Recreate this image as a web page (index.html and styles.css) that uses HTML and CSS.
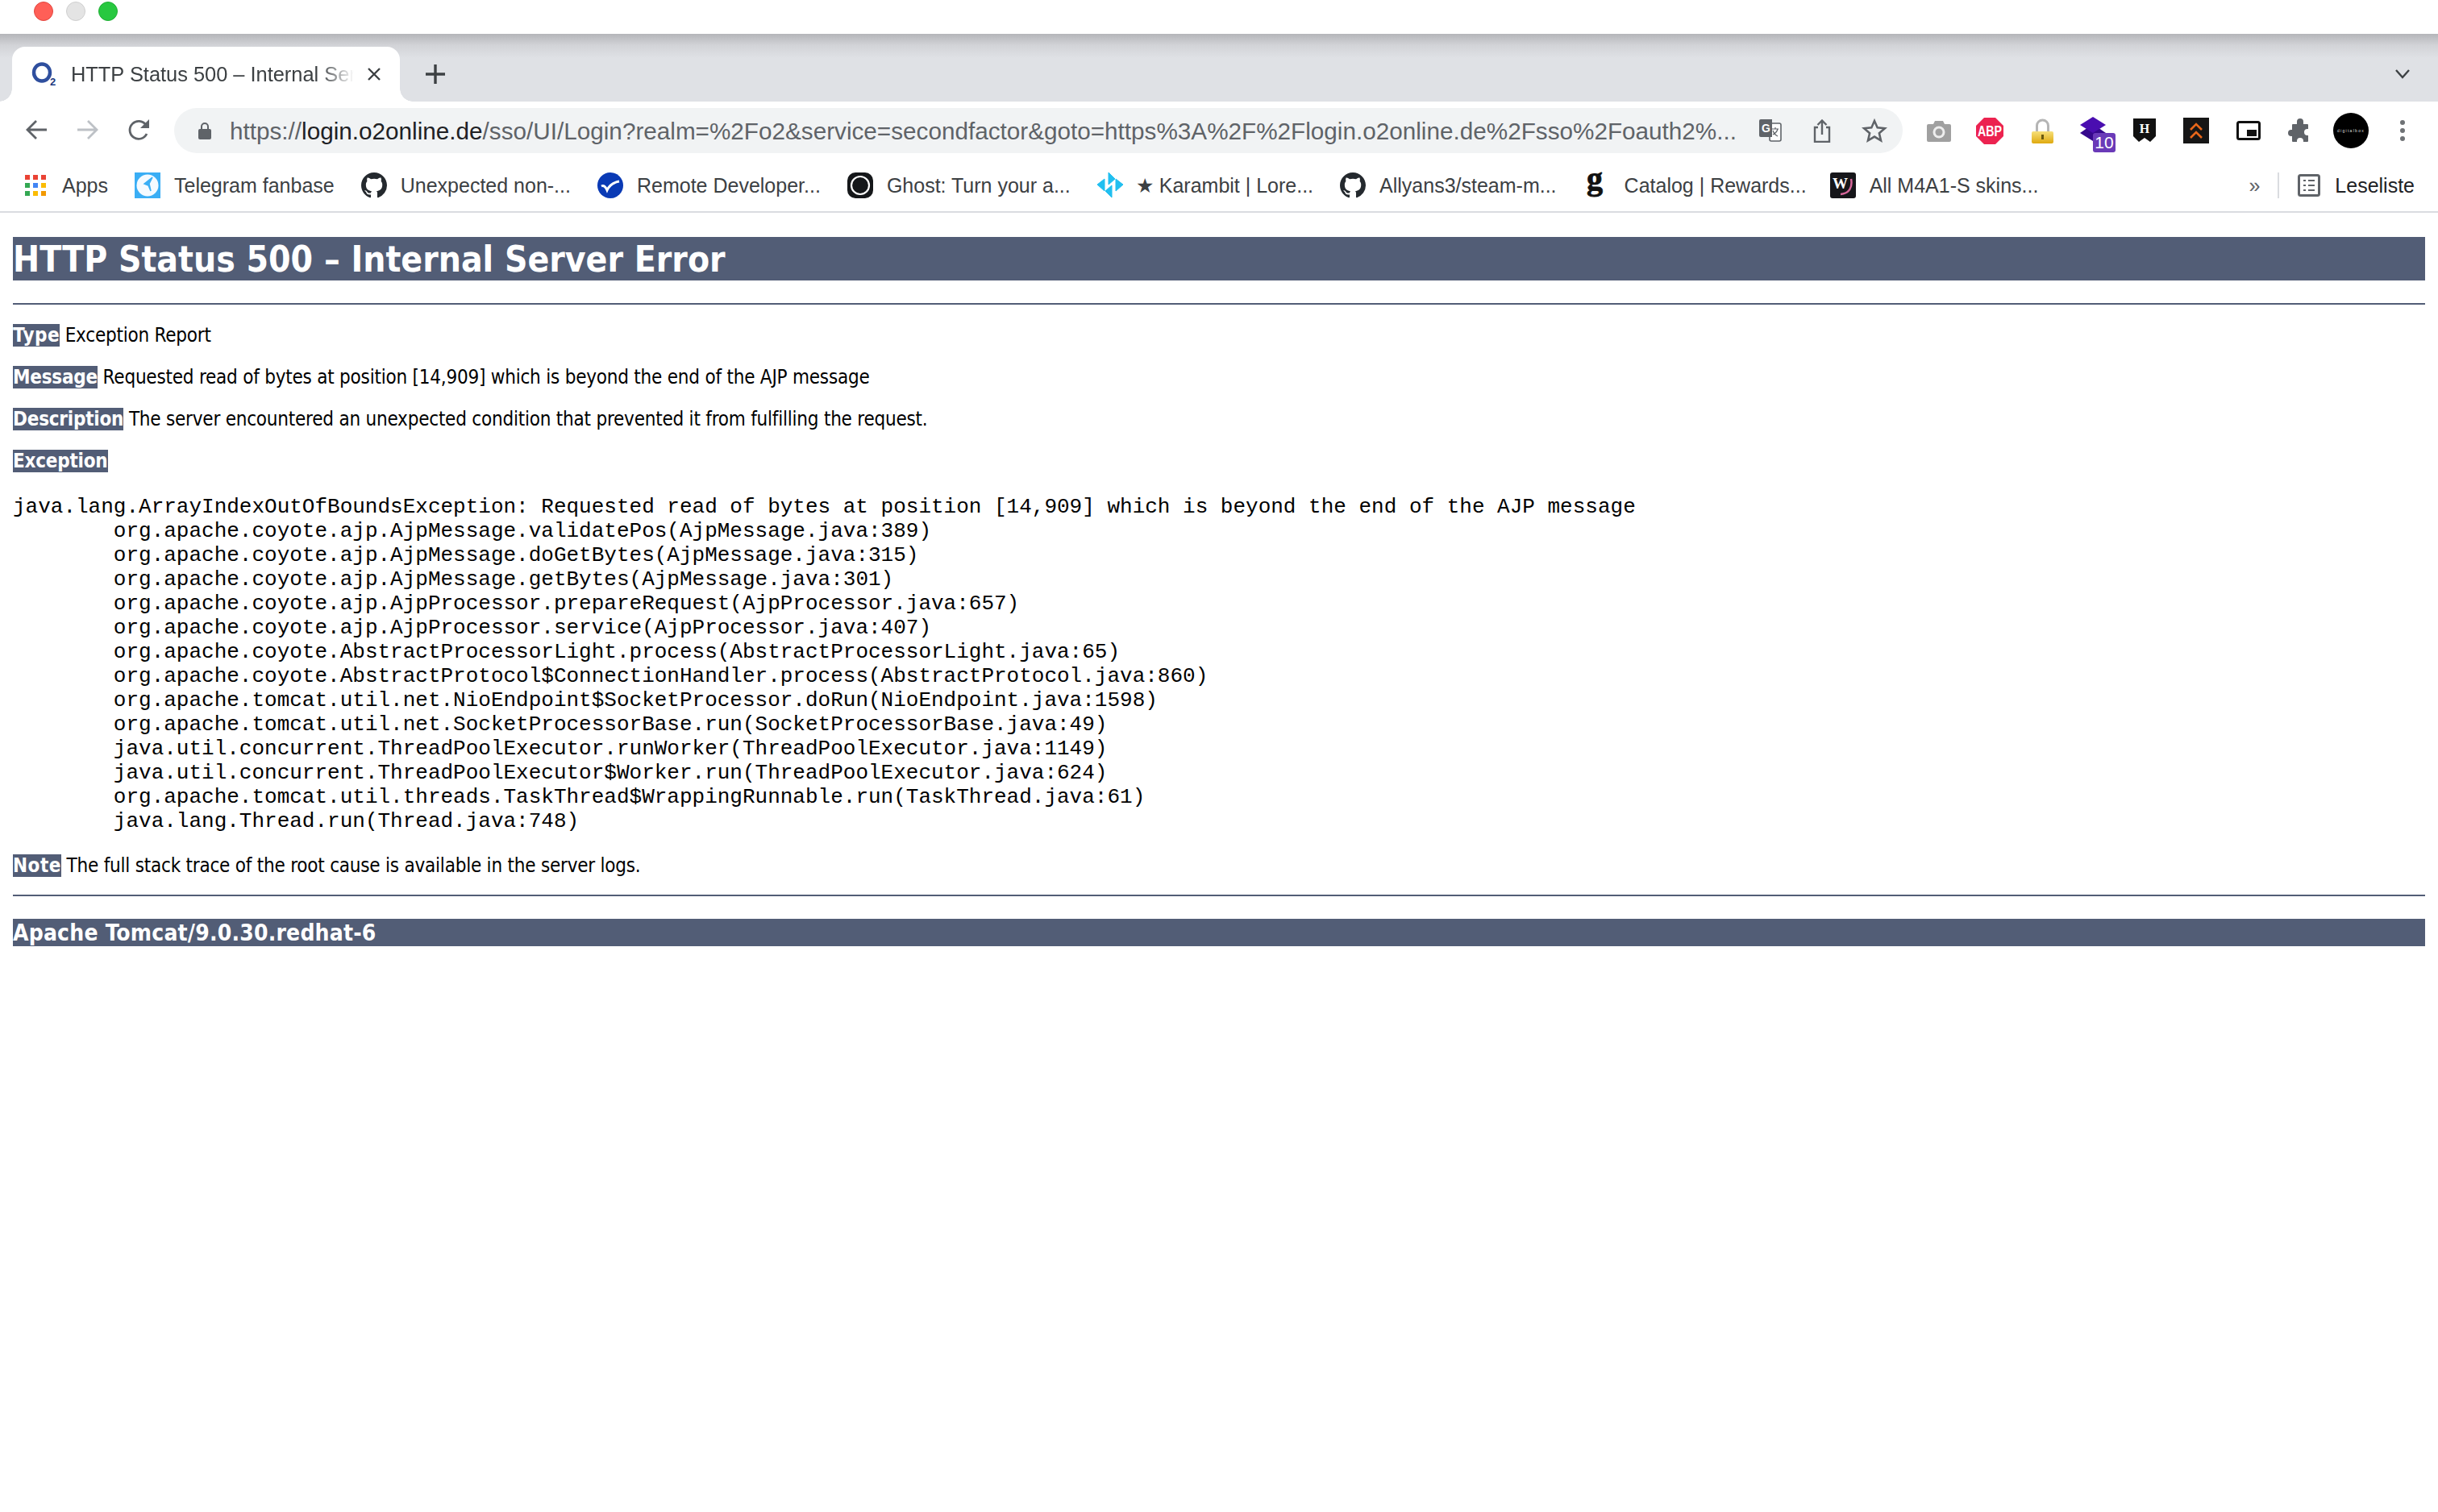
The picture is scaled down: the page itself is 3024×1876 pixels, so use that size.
FILE: index.html
```html
<!DOCTYPE html>
<html lang="en">
<head>
<meta charset="utf-8">
<title>HTTP Status 500 – Internal Server Error</title>
<link rel="stylesheet" href="styles.css">
</head>
<body>
<svg class="defs" width="0" height="0" aria-hidden="true"><defs>
<symbol id="gh" viewBox="0 0 16 16"><path fill="#24292e" d="M8 0C3.58 0 0 3.58 0 8c0 3.54 2.29 6.53 5.47 7.59.4.07.55-.17.55-.38 0-.19-.01-.82-.01-1.49-2.01.37-2.53-.49-2.69-.94-.09-.23-.48-.94-.82-1.13-.28-.15-.68-.52-.01-.53.63-.01 1.08.58 1.23.82.72 1.21 1.87.87 2.33.66.07-.52.28-.87.51-1.07-1.78-.2-3.64-.89-3.64-3.95 0-.87.31-1.59.82-2.15-.08-.2-.36-1.02.08-2.12 0 0 .67-.21 2.2.82.64-.18 1.32-.27 2-.27.68 0 1.36.09 2 .27 1.53-1.04 2.2-.82 2.2-.82.44 1.1.16 1.92.08 2.12.51.56.82 1.27.82 2.15 0 3.07-1.87 3.75-3.65 3.95.29.25.54.73.54 1.48 0 1.07-.01 1.93-.01 2.2 0 .21.15.46.55.38A8.013 8.013 0 0016 8c0-4.42-3.58-8-8-8z"/></symbol>
<linearGradient id="padl" x1="0" y1="0" x2="0" y2="1"><stop offset="0" stop-color="#f7e07a"/><stop offset="1" stop-color="#dfa90f"/></linearGradient>
</defs></svg>
<header class="chrome">
  <div class="titlebar">
    <span class="light red"></span><span class="light grey"></span><span class="light green"></span>
  </div>
  <div class="tabstrip">
    <div class="tab">
      <svg class="favicon" width="30" height="28" viewBox="0 0 30 28"><ellipse cx="12" cy="12" rx="10" ry="10.500" fill="none" stroke="#2f4f9e" stroke-width="4.400"/><text class="sub2" x="22" y="28">2</text></svg>
      <span class="tabtitle">HTTP Status 500 – Internal Server Error</span>
      <svg class="tabclose" width="18" height="18" viewBox="0 0 18 18"><path d="M2 2l14 14M16 2L2 16" stroke="#3c4043" stroke-width="2.400" fill="none"/></svg>
    </div>
    <svg class="newtab" width="24" height="24" viewBox="0 0 24 24"><path d="M12 0v24M0 12h24" stroke="#3c4043" stroke-width="3.400" fill="none"/></svg>
    <svg class="tabsearch" width="18" height="12" viewBox="0 0 18 12"><path d="M1 1l8 9 8-9" stroke="#3c4043" stroke-width="2.400" fill="none"/></svg>
  </div>
  <div class="toolbar">
    <svg class="nav" width="28" height="26" viewBox="0 0 28 26"><path d="M27 13H3M14 2L3 13l11 11" stroke="#5f6368" stroke-width="2.800" fill="none"/></svg>
    <svg class="nav" width="28" height="26" viewBox="0 0 28 26"><path d="M1 13h24M14 2l11 11-11 11" stroke="#bdc1c6" stroke-width="2.800" fill="none"/></svg>
    <svg class="nav" width="28" height="28" viewBox="0 0 28 28"><path d="M23 19a11 11 0 1 1-1-11" stroke="#5f6368" stroke-width="2.800" fill="none"/><path d="M26 1v11H15z" fill="#5f6368"/></svg>
    <div class="omnibox">
      <svg class="lock" width="16" height="21" viewBox="0 0 16 21"><path d="M4 8V5a4 4 0 0 1 8 0v3" stroke="#5f6368" stroke-width="2" fill="none"/><rect y="8" width="16" height="13" rx="2" fill="#5f6368"/></svg>
      <span class="url">https://<b class="host">login.o2online.de</b>/sso/UI/Login?realm=%2Fo2&amp;service=secondfactor&amp;goto=https%3A%2F%2Flogin.o2online.de%2Fsso%2Foauth2%...</span>
      <svg class="omni-i" width="28" height="28" viewBox="0 0 28 28"><rect x="13" y="5" width="14" height="22" rx="2" fill="#fff" stroke="#5f6368" stroke-width="1.600"/><path d="M2 0h14v22H2a2 2 0 0 1-2-2V2a2 2 0 0 1 2-2z" fill="#5f6368"/><text class="gtxt" x="3" y="15.500">G</text><path d="M16 12h8M20 10v2M23 12c-1 4-4 6-6 7M17 14c1 3 4 6 6 7" stroke="#5f6368" stroke-width="1.200" fill="none"/></svg>
      <svg class="omni-i" width="22" height="29" viewBox="0 0 22 29"><path d="M6 10H2v18h18V10h-4M11 19V2M5.500 7L11 1.500 16.500 7" stroke="#5f6368" stroke-width="2.400" fill="none"/></svg>
      <svg class="omni-i" width="32" height="30" viewBox="0 0 32 30"><path d="M16 3l3.700 8.400 9.200.900-7 6 2.100 9L16 22.600 8 27.300l2.100-9-7-6 9.200-.9z" stroke="#5f6368" stroke-width="2.600" fill="none"/></svg>
    </div>
    <div class="ext">
      <svg class="e1" width="30" height="27" viewBox="0 0 30 27"><path d="M2 5h6l2-4h10l2 4h6a2 2 0 0 1 2 2v18a2 2 0 0 1-2 2H2a2 2 0 0 1-2-2V7a2 2 0 0 1 2-2z" fill="#a0a0a0"/><circle cx="15" cy="15" r="7.500" fill="#eee"/><circle cx="15" cy="15" r="4.500" fill="#a0a0a0"/></svg>
      <svg class="e2" width="34" height="33" viewBox="0 0 34 33"><path d="M10 0h14l10 10v13L24 33H10L0 23V10z" fill="#ec2350"/><text class="abp" x="17" y="23" textLength="30" lengthAdjust="spacingAndGlyphs">ABP</text></svg>
      <svg class="e3" width="27" height="31" viewBox="0 0 27 31"><path d="M6.500 17V9a7 7 0 0 1 14 0v8" stroke="#b5b5b5" stroke-width="3" fill="none"/><rect y="16" width="27" height="15" rx="2" fill="url(#padl)"/><rect x="12" y="20" width="3" height="6" fill="#6b5a10"/></svg>
      <span class="e4"><svg width="32" height="30" viewBox="0 0 32 30"><path d="M16 9l16 11-16 10L0 20z" fill="#35088c"/><path d="M16 0l16 10-16 10L0 10z" fill="#4a0eb0"/></svg><span class="badge">10</span></span>
      <svg class="e5" width="28" height="29" viewBox="0 0 28 29"><path d="M0 0h28v22l-7 7-7-5-7 5-7-7z" fill="#111"/><text class="htxt" x="14" y="18">H</text></svg>
      <svg class="e6" width="32" height="32" viewBox="0 0 32 32"><rect width="32" height="32" fill="#161616"/><path d="M9 15l7-7 7 7M9 25l7-7 7 7" stroke="#e8671a" stroke-width="2.600" fill="none"/></svg>
      <svg class="e7" width="30" height="24" viewBox="0 0 30 24"><rect x="1.500" y="1.500" width="27" height="21" rx="2" fill="#fff" stroke="#111" stroke-width="3"/><rect x="13" y="11" width="12" height="8" fill="#111"/></svg>
      <svg class="e8" width="30" height="30" viewBox="0 0 30 30"><path d="M6 7h5V4a4 4 0 0 1 8 0v3h5a1 1 0 0 1 1 1v5h-1a4 4 0 0 0 0 8h1v7a1 1 0 0 1-1 1h-5v-1a4 4 0 0 0-8 0v1H6a1 1 0 0 1-1-1v-6H4a4 4 0 0 1 0-8h1V8a1 1 0 0 1 1-1z" fill="#5f6368"/></svg>
      <span class="avatar"><span class="avatar-t">digitalbox</span></span>
      <svg class="e9" width="8" height="26" viewBox="0 0 8 26"><circle cx="4" cy="3" r="3" fill="#6f7275"/><circle cx="4" cy="13" r="3" fill="#6f7275"/><circle cx="4" cy="23" r="3" fill="#6f7275"/></svg>
    </div>
  </div>
  <nav class="bookmarks">
    <a class="bm apps"><svg width="26" height="26" viewBox="0 0 26 26"><g><rect width="6" height="6" fill="#ea4335"/><rect x="10" width="6" height="6" fill="#ea4335"/><rect x="20" width="6" height="6" fill="#ea4335"/><rect y="10" width="6" height="6" fill="#34a853"/><rect x="10" y="10" width="6" height="6" fill="#4285f4"/><rect x="20" y="10" width="6" height="6" fill="#fbbc05"/><rect y="20" width="6" height="6" fill="#34a853"/><rect x="10" y="20" width="6" height="6" fill="#fbbc05"/><rect x="20" y="20" width="6" height="6" fill="#f29900"/></g></svg><span>Apps</span></a>
    <a class="bm"><svg width="32" height="32" viewBox="0 0 32 32"><rect width="32" height="32" fill="#3aaef5"/><circle cx="16" cy="16" r="13.500" fill="#f4faff"/><path d="M22 6L12 14l5 2 3 7-2-9z" fill="#3aaef5" stroke="#3aaef5" stroke-width="1.500"/></svg><span>Telegram fanbase</span></a>
    <a class="bm"><svg width="32" height="32"><use href="#gh"/></svg><span>Unexpected non-...</span></a>
    <a class="bm"><svg width="32" height="32" viewBox="0 0 32 32"><circle cx="16" cy="16" r="16" fill="#0a3ab5"/><path d="M5 17Q9 15 12 22 16 13 27 11" fill="none" stroke="#fff" stroke-width="3"/></svg><span>Remote Developer...</span></a>
    <a class="bm"><svg width="32" height="32" viewBox="0 0 32 32"><rect width="32" height="32" rx="10" fill="#15171a"/><circle cx="16" cy="16" r="11" fill="none" stroke="#fff" stroke-width="2.200"/><circle cx="16" cy="16" r="8" fill="#15171a"/></svg><span>Ghost: Turn your a...</span></a>
    <a class="bm kar"><svg width="32" height="32" viewBox="0 0 32 32"><path d="M14 0l8 8-8 7zM23 8l9 7-9 8zM9 8l-9 7 9 8zM18 16l-8 7 8 8z" fill="#21bff0" stroke="#21bff0" stroke-linejoin="round"/></svg><span class="star">★</span><span class="kar-t">Karambit | Lore...</span></a>
    <a class="bm"><svg width="32" height="32"><use href="#gh"/></svg><span>Allyans3/steam-m...</span></a>
    <a class="bm cat"><svg width="26" height="32" viewBox="0 0 26 32"><text class="gmark" x="0" y="21">g</text></svg><span>Catalog | Rewards...</span></a>
    <a class="bm"><svg width="32" height="32" viewBox="0 0 32 32"><rect width="32" height="32" rx="3" fill="#16161a"/><text class="wmark" x="3" y="20">W</text><path d="M26 8c2 10-2 18-13 19" stroke="#d6679a" stroke-width="2.500" fill="none"/></svg><span>All M4A1-S skins...</span></a>
    <span class="more">»</span>
    <span class="sep"></span>
    <a class="bm read"><svg width="28" height="28" viewBox="0 0 28 28"><rect x="1.500" y="1.500" width="25" height="25" rx="2" fill="none" stroke="#5f6368" stroke-width="3"/><path d="M7 8h3M13 8h8M7 14h3M13 14h8M7 20h3M13 20h8" stroke="#5f6368" stroke-width="2.200"/></svg><span>Leseliste</span></a>
  </nav>
</header>
<main class="page">
  <h1>HTTP Status 500 – Internal Server Error</h1>
  <hr class="line">
  <p><b class="short">Type</b> Exception Report</p>
  <p><b>Message</b> Requested read of bytes at position [14,909] which is beyond the end of the AJP message</p>
  <p><b>Description</b> The server encountered an unexpected condition that prevented it from fulfilling the request.</p>
  <p><b>Exception</b></p>
  <pre>java.lang.ArrayIndexOutOfBoundsException: Requested read of bytes at position [14,909] which is beyond the end of the AJP message
	org.apache.coyote.ajp.AjpMessage.validatePos(AjpMessage.java:389)
	org.apache.coyote.ajp.AjpMessage.doGetBytes(AjpMessage.java:315)
	org.apache.coyote.ajp.AjpMessage.getBytes(AjpMessage.java:301)
	org.apache.coyote.ajp.AjpProcessor.prepareRequest(AjpProcessor.java:657)
	org.apache.coyote.ajp.AjpProcessor.service(AjpProcessor.java:407)
	org.apache.coyote.AbstractProcessorLight.process(AbstractProcessorLight.java:65)
	org.apache.coyote.AbstractProtocol$ConnectionHandler.process(AbstractProtocol.java:860)
	org.apache.tomcat.util.net.NioEndpoint$SocketProcessor.doRun(NioEndpoint.java:1598)
	org.apache.tomcat.util.net.SocketProcessorBase.run(SocketProcessorBase.java:49)
	java.util.concurrent.ThreadPoolExecutor.runWorker(ThreadPoolExecutor.java:1149)
	java.util.concurrent.ThreadPoolExecutor$Worker.run(ThreadPoolExecutor.java:624)
	org.apache.tomcat.util.threads.TaskThread$WrappingRunnable.run(TaskThread.java:61)
	java.lang.Thread.run(Thread.java:748)</pre>
  <p class="note"><b class="short">Note</b> The full stack trace of the root cause is available in the server logs.</p>
  <hr class="line foot-line">
  <h3>Apache Tomcat/9.0.30.redhat-6</h3>
</main>
</body>
</html>
```
FILE: styles.css
```css
* { box-sizing: border-box; }
html, body { margin: 0; padding: 0; background: #fff; }
body { width: 3024px; height: 1876px; overflow: hidden; font-family: "DejaVu Sans Condensed", "DejaVu Sans", sans-serif; font-stretch: condensed; color: #000; }
.defs { display: block; height: 0; }
.titlebar { height: 42px; display: flex; gap: 16px; padding: 2px 0 0 42px; background: #fff; }
.light { width: 24px; height: 24px; border-radius: 50%; }
.red { background: #ff5f57; border: 1px solid #e2463f; }
.grey { background: #e4e4e4; border: 1px solid #cfcfcf; }
.green { background: #28c840; border: 1px solid #1fae34; }
.tabstrip { height: 84px; display: flex; align-items: flex-end; padding-left: 15px; background: linear-gradient(#b4b5b9 0, #d2d3d7 14px, #dfe1e5 30px); }
.tab { width: 481px; height: 68px; background: #fff; border-radius: 16px 16px 0 0; display: flex; align-items: center; padding-left: 25px; position: relative; }
.tab::before, .tab::after { content: ""; position: absolute; bottom: 0; width: 16px; height: 16px; }
.tab::before { left: -16px; background: radial-gradient(circle at 0 0, transparent 15.500px, #fff 16px); }
.tab::after { right: -16px; background: radial-gradient(circle at 100% 0, transparent 15.500px, #fff 16px); }
.favicon { flex: none; overflow: visible; }
.sub2 { font: 700 13px "Liberation Sans", sans-serif; fill: #1d3a80; }
.tabtitle { margin-left: 18px; width: 351px; flex: none; font: 25.400px/30px "Liberation Sans", sans-serif; font-stretch: normal; color: #3c4043; white-space: nowrap; overflow: hidden; -webkit-mask-image: linear-gradient(90deg, #000 88%, transparent); mask-image: linear-gradient(90deg, #000 88%, transparent); }
.tabclose { flex: none; margin-left: 16px; }
.newtab { flex: none; margin: 0 0 22px 32px; }
.tabsearch { flex: none; margin: 0 35px 28px auto; }
.toolbar { height: 70px; display: flex; align-items: flex-start; background: #fff; padding: 8px 0 0 31px; }
.nav { flex: none; margin: 14px 36px 0 0; }
.nav + .nav + .nav { margin-top: 13px; margin-right: 29px; }
.omnibox { width: 2144px; height: 56px; flex: none; display: flex; align-items: center; background: #f1f3f4; border-radius: 28px; padding-left: 30px; }
.lock { flex: none; }
.url { margin: 2px 0 0 23px; width: 1875px; flex: none; font: 29.700px/38px "Liberation Sans", sans-serif; font-stretch: normal; color: #5f6368; white-space: nowrap; }
.host { font-weight: 400; color: #202124; }
.omni-i { flex: none; }
.omni-i:nth-of-type(2) { margin-left: 22px; }
.omni-i:nth-of-type(3) { margin-left: 39px; }
.omni-i:nth-of-type(4) { margin-left: 38px; }
.gtxt { font: 700 14px "Liberation Sans", sans-serif; fill: #fff; }
.ext { margin-left: 30px; height: 56px; display: flex; align-items: center; flex: none; }
.e2 { margin-left: 31px; }
.e3 { margin-left: 35px; }
.e4 { margin-left: 33px; position: relative; display: block; width: 32px; height: 30px; margin-top: -4px; }
.e4 svg { display: block; }
.badge { position: absolute; left: 16px; top: 20px; width: 28px; height: 24px; background: #6a3ab8; border-radius: 3px; color: #fff; font: 21px/24px "Liberation Sans", sans-serif; text-align: center; font-stretch: normal; }
.e5 { margin-left: 34px; margin-top: -2px; }
.e6 { margin-left: 34px; }
.e7 { margin-left: 34px; }
.e8 { margin-left: 34px; margin-top: -1px; }
.avatar { margin-left: 26px; width: 44px; height: 44px; border-radius: 50%; background: #000; display: flex; align-items: center; justify-content: center; overflow: hidden; }
.avatar-t { font: 5px "Liberation Sans", sans-serif; color: #ddd; letter-spacing: 1.300px; white-space: nowrap; }
.e9 { margin-left: 38px; }
.abp { font: 700 19px "Liberation Sans", sans-serif; fill: #fff; text-anchor: middle; }
.htxt { font: 700 16px "Liberation Serif", serif; fill: #fff; text-anchor: middle; }
.gmark { font: 700 40px "Liberation Serif", serif; fill: #111; stroke: #111; stroke-width: .8px; }
.wmark { font: 700 19px "Liberation Serif", serif; fill: #fff; }
.bookmarks { height: 68px; display: flex; align-items: center; padding: 2px 29px 0 31px; border-bottom: 2px solid #dadce0; background: #fff; font: 25px/32px "Liberation Sans", sans-serif; font-stretch: normal; color: #3c4043; white-space: nowrap; }
.bm { display: flex; align-items: center; gap: 17px; margin-right: 33px; flex: none; }
.bm svg { flex: none; display: block; overflow: visible; }
.apps { gap: 20px; }
.kar { gap: 0; }
.cat { margin-left: 4px; margin-right: 29px; gap: 21px; }
.star { margin-left: 16px; margin-right: 7px; }
.more { margin-left: auto; color: #5f6368; margin-right: 22px; }
.sep { width: 2px; height: 32px; background: #dadce0; margin-right: 23px; }
.read { margin-right: 0; gap: 18px; }
.read span { color: #202124; }
.page { padding: 30px 16px 0; }
h1 { margin: 0; height: 54px; font-size: 44px; font-weight: 700; line-height: 56px; color: #fff; background: #525d76; white-space: nowrap; }
.line { height: 2px; margin: 28px 0 24px; border: 0; background: #525d76; }
p { margin: 0 0 24px; font-size: 24px; line-height: 28px; letter-spacing: -.22px; }
p b { background: #525d76; color: #fff; }
p b.short { letter-spacing: .5px; }
pre { margin: 28px 0 26px; font: 26px/30px "Liberation Mono", monospace; tab-size: 8; }
.note { margin-bottom: 22px; }
.foot-line { margin: 0 0 28px; }
h3 { margin: 0; height: 34px; font-size: 28px; font-weight: 700; line-height: 36px; letter-spacing: .2px; color: #fff; background: #525d76; }
```
